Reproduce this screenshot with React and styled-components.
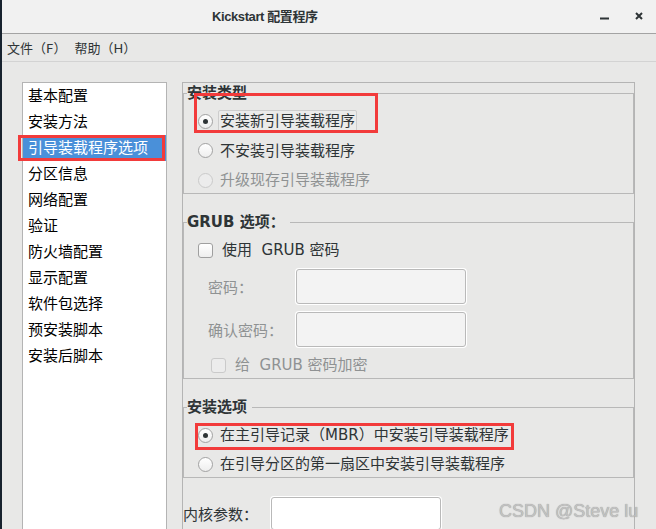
import React from "react";
import styled, { createGlobalStyle } from "styled-components";

const GlobalStyle = createGlobalStyle`
  html, body {
    margin: 0;
    padding: 0;
    background: #e8e8e7;
  }
  * {
    box-sizing: border-box;
  }
`;

const FONT = `"DejaVu Sans", "Noto Sans CJK SC", sans-serif`;

const Window = styled.div`
  position: relative;
  width: 656px;
  height: 529px;
  overflow: hidden;
  display: flex;
  flex-direction: column;
  background: #e8e8e7;
  border-left: 2px solid #17222e;
  font-family: ${FONT};
  color: #2e3436;
`;

const TitleBar = styled.div`
  height: 34px;
  flex: none;
  display: flex;
  align-items: center;
  padding: 0 13px 2px 210px;
  background: #f1f1f1;
  border-bottom: 1px solid #a3a3a3;
`;

const Title = styled.div`
  font-family: "Liberation Sans", "Noto Sans CJK SC", sans-serif;
  font-size: 13px;
  font-weight: bold;
  letter-spacing: -0.4px;
  color: #2e3436;
`;

const Controls = styled.div`
  margin-left: auto;
  display: flex;
  align-items: center;
  gap: 26px;
`;

const MenuBar = styled.div`
  height: 28px;
  flex: none;
  display: flex;
  align-items: center;
  gap: 8px;
  padding-left: 5px;
  border-bottom: 1px solid #d3d3d3;
`;

const MenuItem = styled.span`
  font-size: 13px;
  color: #2e3436;
`;

const Body = styled.div`
  flex: 1;
  min-height: 0;
  display: flex;
  gap: 15px;
  padding: 20px 0 0 20px;
`;

const Sidebar = styled.div`
  width: 145px;
  flex: none;
  display: flex;
  flex-direction: column;
  background: #fff;
  border: 1px solid #b4b4b4;
  border-bottom: none;
`;

const SideItem = styled.div`
  height: 26px;
  line-height: 26px;
  padding-left: 5px;
  font-size: 15px;
  color: ${(p) => (p.$active ? "#fff" : "#000")};
  background: ${(p) => (p.$active ? "#4a90d9" : "transparent")};
`;

const Main = styled.div`
  width: 453px;
  flex: none;
  display: flex;
  flex-direction: column;
  border: 1px solid #b4b4b4;
  border-bottom: none;
  overflow: hidden;
`;

const Frame = styled.fieldset`
  margin: ${(p) => (p.$first ? "1px" : "19px")} 0 0 0;
  padding: 8px 0 2px 0;
  min-width: 0;
  border: 1px solid #b8b8b8;
  display: flex;
  flex-direction: column;
  gap: ${(p) => p.$gap ?? 7}px;
`;

const Legend = styled.legend`
  margin-left: 3px;
  padding: 0 5px 0 0;
  font-size: 15px;
  line-height: 18px;
  font-weight: bold;
  color: #2e3436;
`;

const Option = styled.div`
  height: 22px;
  display: flex;
  align-items: center;
  gap: 5px;
  margin-top: ${(p) => p.$top || 0}px;
  padding-left: ${(p) => 14 + (p.$indent || 0)}px;
  font-size: 15px;
  color: ${(p) => (p.$disabled ? "#8f9293" : "#2e3436")};
  white-space: pre;
`;

const OptionText = styled.span`
  height: 22px;
  line-height: 20px;
  padding: 0 1px;
  border: 1px solid ${(p) => (p.$focus ? "#cdcdcd" : "transparent")};
  border-radius: 2px;
  background: ${(p) => (p.$focus ? "#ebebea" : "transparent")};
`;

const Radio = styled.span`
  width: 15px;
  height: 15px;
  flex: none;
  border-radius: 50%;
  border: 1px solid ${(p) => (p.$disabled ? "#cacaca" : "#a2a2a2")};
  background: ${(p) =>
    p.$disabled ? "#ececec" : "linear-gradient(#ffffff, #eeeeee)"};
  display: flex;
  align-items: center;
  justify-content: center;
  &::after {
    content: "";
    width: 5px;
    height: 5px;
    border-radius: 50%;
    background: #2e3436;
    display: ${(p) => (p.$checked ? "block" : "none")};
  }
`;

const Checkbox = styled.span`
  width: 15px;
  height: 15px;
  flex: none;
  border-radius: 3px;
  border: 1px solid ${(p) => (p.$disabled ? "#cacaca" : "#9f9f9f")};
  background: ${(p) =>
    p.$disabled ? "#ececec" : "linear-gradient(#ffffff, #eeeeee)"};
  margin-right: 2px;
`;

const FormGrid = styled.div`
  display: grid;
  grid-template-columns: 88px 170px;
  row-gap: 8px;
  align-items: center;
  padding-left: 24px;
  margin-top: 8px;
`;

const FieldLabel = styled.span`
  font-size: 15px;
  color: #8f9293;
`;

const Entry = styled.div`
  height: ${(p) => p.$h || 35}px;
  border: 1px solid #b9b9b9;
  border-radius: 3px;
  background: ${(p) => (p.$white ? "#fff" : "#f3f3f3")};
  box-shadow: 0 0 0 1px #fff;
`;

const KernelRow = styled.div`
  margin-top: 19px;
  display: grid;
  grid-template-columns: 88px 170px;
  align-items: center;
`;

const KernelLabel = styled.span`
  font-size: 15px;
  color: #2e3436;
`;

const RedMark = styled.div`
  position: absolute;
  left: ${(p) => p.$x - 2}px;
  top: ${(p) => p.$y}px;
  width: ${(p) => p.$w}px;
  height: ${(p) => p.$h}px;
  border: 3px solid #f23b3b;
  pointer-events: none;
`;

const Watermark = styled.div`
  position: absolute;
  left: 497px;
  top: 501px;
  font-family: "Liberation Sans", Arial, sans-serif;
  font-size: 18px;
  color: #c2c2c2;
  text-shadow: 0 0 1px #8a8a8a;
  white-space: nowrap;
`;

const MinIcon = () => (
  <svg width="9" height="8" viewBox="0 0 9 8">
    <rect x="0" y="5.5" width="9" height="2" fill="#2e3436" />
  </svg>
);

const CloseIcon = () => (
  <svg width="8" height="8" viewBox="0 0 8 8">
    <path d="M1 1 L7 7 M7 1 L1 7" stroke="#2e3436" strokeWidth="2" />
  </svg>
);

const sideItems = [
  "基本配置",
  "安装方法",
  "引导装载程序选项",
  "分区信息",
  "网络配置",
  "验证",
  "防火墙配置",
  "显示配置",
  "软件包选择",
  "预安装脚本",
  "安装后脚本",
  "",
  "",
  "",
  "",
  "",
];

export default function App() {
  return (
    <>
      <GlobalStyle />
      <Window>
        <TitleBar>
          <Title>Kickstart 配置程序</Title>
          <Controls>
            <MinIcon />
            <CloseIcon />
          </Controls>
        </TitleBar>
        <MenuBar>
          <MenuItem>文件（F）</MenuItem>
          <MenuItem>帮助（H）</MenuItem>
        </MenuBar>
        <Body>
          <Sidebar>
            {sideItems.map((s, i) => (
              <SideItem key={i} $active={i === 2}>
                {s}
              </SideItem>
            ))}
          </Sidebar>
          <Main>
            <Frame $first $gap={7.5}>
              <Legend>安装类型</Legend>
              <Option>
                <Radio $checked />
                <OptionText $focus>安装新引导装载程序</OptionText>
              </Option>
              <Option>
                <Radio />
                <OptionText>不安装引导装载程序</OptionText>
              </Option>
              <Option $disabled>
                <Radio $disabled />
                <OptionText>升级现存引导装载程序</OptionText>
              </Option>
            </Frame>

            <Frame $gap={0}>
              <Legend>GRUB 选项：</Legend>
              <Option>
                <Checkbox />
                <OptionText>使用  GRUB 密码</OptionText>
              </Option>
              <FormGrid>
                <FieldLabel>密码：</FieldLabel>
                <Entry />
                <FieldLabel>确认密码：</FieldLabel>
                <Entry />
              </FormGrid>
              <Option $disabled $indent={13} $top={7}>
                <Checkbox $disabled />
                <OptionText>给  GRUB 密码加密</OptionText>
              </Option>
            </Frame>

            <Frame $gap={7}>
              <Legend>安装选项</Legend>
              <Option>
                <Radio $checked />
                <OptionText>在主引导记录（MBR）中安装引导装载程序</OptionText>
              </Option>
              <Option>
                <Radio />
                <OptionText>在引导分区的第一扇区中安装引导装载程序</OptionText>
              </Option>
            </Frame>

            <KernelRow>
              <KernelLabel>内核参数：</KernelLabel>
              <Entry $white $h={33} />
            </KernelRow>
          </Main>
        </Body>

        <RedMark $x={18} $y={135} $w={147} $h={26} />
        <RedMark $x={194} $y={93} $w={184} $h={40} />
        <RedMark $x={195} $y={423} $w={319} $h={27} />
        <Watermark>CSDN @Steve lu</Watermark>
      </Window>
    </>
  );
}
